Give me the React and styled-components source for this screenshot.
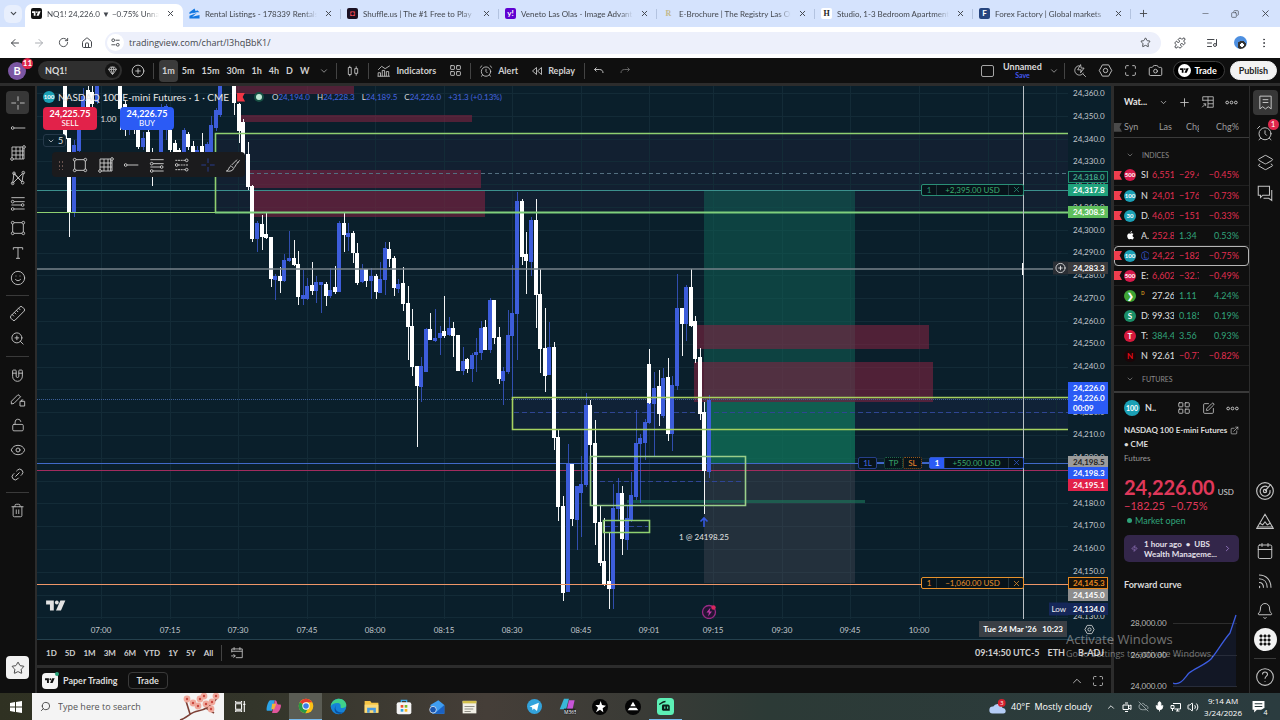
import React from 'react';
import styled, { createGlobalStyle, css } from 'styled-components';
import {
    ArrowLeft, ArrowRight, RotateCw, House, Star, Minus, Copy, X, Plus, ChevronDown, ChevronUp, ChevronRight,
    CirclePlus, Gem, LayoutGrid, AlarmClock, Camera, Maximize, SquarePen, Smile, Ruler, ZoomIn, Magnet,
    LockOpen, Trash2, Calendar, Bell, Search, Puzzle, ListMusic, Mic, Volume2, EllipsisVertical, CloudOff,
    ExternalLink, Eye, Link2, Zap, Layers2
} from 'lucide-react';

const GlobalStyle = createGlobalStyle`
    * { box-sizing: border-box; }
    body {
        margin: 0;
        background: #0f0f0f;
        overflow: hidden;
    }
    button, input {
        font: inherit;
        color: inherit;
        border: 0;
        padding: 0;
        margin: 0;
        background: none;
    }
    button { cursor: pointer; }
    a { color: inherit; text-decoration: none; }
`

const Page = styled.div`
    position: relative;
    display: flex;
    flex-direction: column;
    height: 100vh;
    color: #dbdbdb;
    font-family: Lato, 'Open Sans', sans-serif;
    font-size: 9px;
    line-height: 12px;
    svg { display: block; flex: none; }
`

/* ---------- icons ---------- */

const glyphs = {
    cross: <path d="M12 2v7M12 15v7M2 12h7M15 12h7" />,
    trend: <><circle cx="4" cy="12" r="2" /><path d="M6 12h17" /></>,
    grid: <><path d="M3 3h16v18H3zM3 9h18M3 15h18M9 3v18M15 3v18M21 5v16h-2" /><circle cx="21" cy="3" r="2" fill="#111" /><circle cx="3" cy="21" r="2" fill="#111" /></>,
    pattern: <><path d="M4 20 6 5l12 13 2-14M6 5 18 18M4 20l14-14" /><circle cx="4" cy="20" r="2" /><circle cx="6" cy="5" r="2" /><circle cx="20" cy="4" r="2" /><circle cx="19" cy="19" r="2" /></>,
    fib: <><path d="M2 4h20M6 10h16M2 15h15M6 21h16" /><circle cx="4" cy="10" r="2" /><circle cx="19" cy="15" r="2" /><circle cx="4" cy="21" r="2" /></>,
    position: <><path d="M2 5h15M6 12h16M2 19h15" strokeDasharray="3 1" /><circle cx="19" cy="5" r="2" /><circle cx="4" cy="12" r="2" /><circle cx="19" cy="19" r="2" /></>,
    rect: <><path d="M6 4h12M6 20h12M4 6v12M20 6v12" /><circle cx="4" cy="4" r="2" /><circle cx="20" cy="4" r="2" /><circle cx="4" cy="20" r="2" /><circle cx="20" cy="20" r="2" /></>,
    text: <path d="M5 7V4h14v3M12 4v16M9 20h6" />,
    brush: <path d="M2 21c4 0 3-6 7-8l4 4c-1 4-6 5-11 4zM10 12l8-8M14 16l3-5 5-6M18 7l2 2" />,
    pencilLock: <><path d="M2 14 12 4l4 3L6 17l-4 1zM15 14h7v7h-7zM17 14v-2h3" /></>,
    candles: <><path d="M4 6h5v12H4zM6.5 3v3M6.5 18v3M15 8h5v8h-5zM17.5 4v4M17.5 16v4" /></>,
    indicators: <><path d="M2 21v-6h4v6M9 21V11h4v10M16 21v-8h4v8M1 21h21M2 10l6-6 6 4 8-5" /></>,
    rewind: <path d="M11 5 3 12l8 7zM21 5l-8 7 8 7z" />,
    undo: <path d="M7 5 3 9l4 4M3 9h10c5 0 7 3 7 7" />,
    redo: <path d="m17 5 4 4-4 4M21 9H11c-5 0-7 3-7 7" />,
    gear: <><path d="M7 3h10l5 9-5 9H7l-5-9z" /><circle cx="12" cy="12" r="3.5" /></>,
    quickSearch: <><path d="M11 3a8 8 0 1 0 7 12M17 17l5 5M13 1l-5 9h6l-1 5 6-8h-5z" /></>,
    list: <path d="M4 3h16v18l-4-3-4 3-4-3-4 3zM8 8h8M8 12h8" />,
    chat: <path d="M3 3h15v12H9l-3 3v-3H3zM21 8v14l-4-3h-7" />,
    target: <><circle cx="12" cy="12" r="10" /><path d="M15 7a6 6 0 1 0 3 4M12 12l7-8" /><circle cx="12" cy="12" r="2" /></>,
    ideas: <path d="M2 20h20L12 3zM5 15l4 2 3-4 3 4 4-2M2 20l-1 2h22l-1-2" />,
    stream: <path d="M4 21a1 1 0 1 0 0-2M4 14c4 0 6 3 6 7M4 9c7 0 11 5 11 12M4 4c10 0 16 7 16 17" />,
    help: <><circle cx="12" cy="12" r="10" /><path d="M9 9c0-4 6-4 6 0 0 2-3 2-3 5M12 17v1" /></>,
    table: <path d="M3 10V3h18v18H10M3 9h18M12 3v18M12 15h9M2 21l6-6M4 15h4v4" />,
    goto: <path d="M3 11V5h18v15H10M3 9h18M7 2v5M17 2v5M2 17h7M6 14l3 3-3 3" />,
    tune: <><circle cx="7" cy="7" r="3" /><circle cx="17" cy="17" r="3" /><path d="M12 7h9M3 17h9" /></>,
    taskView: <path d="M3 7h11v10H3zM3 2v2h11V2M3 22v-2h11v2M19 2v20M17 8h4" />,
    dots: <><circle cx="4" cy="12" r="2.5" /><circle cx="12" cy="12" r="2.5" /><circle cx="20" cy="12" r="2.5" /></>,
    meet: <path d="M4 8h11v9H4zM15 11l5-3v9l-5-3M8 4h6M8 21h6" />,
    network: <path d="M6 5h15v11H9M12 20h7M15 16v4M2 9h6v6H2zM5 15v5" />
}

const Glyph = ({ name, size = 16, stroke = 1.4 }) => (
    <svg width={size} height={size} viewBox="0 0 24 24" fill="none" stroke="currentColor" strokeWidth={stroke} aria-hidden="true">
        {glyphs[name]}
    </svg>
)

const TvMark = ({ width = 20 }) => (
    <svg width={width} height={width * 0.55} viewBox="0 0 36 20" fill="currentColor" aria-hidden="true">
        <path d="M0 1h14v18H7V8H0zM26 1h9l-8 18h-9z" />
        <circle cx="19.5" cy="4.5" r="3.5" />
    </svg>
)

/* ---------- browser ---------- */

const TabStrip = styled.div`
    display: flex;
    align-items: center;
    height: 27px;
    padding-left: 4px;
    background: #d5e3fd;
    color: #43474e;
    font-size: 8px;
`

const TabMenu = styled.button`
    display: grid;
    place-items: center;
    width: 18px;
    height: 18px;
    margin-right: 3px;
    border-radius: 6px;
    background: #e8effd;
`

const Tab = styled.div`
    position: relative;
    display: flex;
    align-items: center;
    flex: 0 1 158px;
    min-width: 0;
    align-self: stretch;
    gap: 5px;
    padding: 0 7px 0 6px;
    ${p => p.$active && css`
        margin-top: 4px;
        padding-bottom: 4px;
        background: #fff;
        border-radius: 7px 7px 0 0;
    `}
    ${p => p.$line && css`
        &::after {
            content: '';
            position: absolute;
            right: 0;
            width: 1px;
            height: 10px;
            background: #b3c3e0;
        }
    `}
`

const TabTitle = styled.span`
    flex: 1;
    min-width: 0;
    overflow: hidden;
    white-space: nowrap;
    mask-image: linear-gradient(to right, #000 88%, transparent);
`

const Close = styled.button`
    display: grid;
    place-items: center;
    width: 12px;
    height: 12px;
`

const Favicon = styled.span`
    display: grid;
    place-items: center;
    flex: none;
    width: 11px;
    height: 11px;
    border-radius: 2px;
    background: ${p => p.$bg};
    color: ${p => p.$fg || '#fff'};
    font-size: 8px;
    font-weight: 700;
    line-height: 11px;
    font-family: ${p => p.$serif ? "'Liberation Serif', serif" : 'inherit'};
`

const WindowButtons = styled.div`
    display: flex;
    margin-left: auto;
    button { display: grid; place-items: center; width: 30px; height: 24px; }
`

const AddressRow = styled.div`
    display: flex;
    align-items: center;
    height: 31px;
    padding: 0 4px 0 3px;
    background: #fff;
    color: #44474c;
    font-family: 'Open Sans', sans-serif;
`

const NavButton = styled.button`
    display: grid;
    place-items: center;
    width: ${p => p.$wide ? 32 : 24}px;
    height: 24px;
    color: ${p => p.$off ? '#aaadb2' : '#44474c'};
`

const AddressBox = styled.label`
    display: flex;
    align-items: center;
    flex: 1;
    height: 22px;
    margin: 0 3px 0 6px;
    padding: 0 10px 0 2px;
    border-radius: 11px;
    background: #edf0fb;
    input { flex: 1; margin-left: 5px; outline: 0; font-size: 9px; }
`

const SiteInfo = styled.span`
    display: grid;
    place-items: center;
    width: 17px;
    height: 17px;
    border-radius: 50%;
    background: #fff;
`

const Profile = styled.span`
    width: 13px;
    height: 13px;
    border-radius: 50%;
    background: radial-gradient(circle at 60% 70%, #fff 0 15%, #333 16% 35%, #4d8fe0 36%);
`

const tabs = [
    { title: 'NQ1! 24,226.0 ▼ −0.75% Unnamed', bg: '#111', mark: <TvMark width={9} />, active: true },
    {
        title: 'Rental Listings - 178339 Rentals', bg: 'transparent',
        mark: <svg width="11" height="11" viewBox="0 0 24 24" fill="#1277e1"><path d="M12 1 1 9v4l14-5zM23 9l-5-4-11 7 10-3zM1 23v-6l16-6-10 8 16-4v8z" /></svg>
    },
    { title: 'Shuffle.us | The #1 Free to Play', bg: '#1b1022', fg: '#ff4d5a', mark: '◘' },
    { title: 'Veneto Las Olas - Image Advantage', bg: '#5f01d1', mark: 'y!' },
    { title: 'E-Brochure | The Registry Las Olas', bg: 'transparent', fg: '#c3b98a', mark: 'R', serif: true },
    { title: 'Studio, 1-3 Bedroom Apartments', bg: '#fff', fg: '#222', mark: 'H', serif: true },
    { title: 'Forex Factory | Global markets', bg: '#26457f', mark: 'F' }
]

const Browser = () => (
    <>
        <TabStrip>
            <TabMenu aria-label="Search tabs"><ChevronDown size={9} strokeWidth={3} /></TabMenu>
            {tabs.map((t, i) => (
                <Tab key={t.title} $active={t.active} $line={i > 0}>
                    <Favicon $bg={t.bg} $fg={t.fg} $serif={t.serif}>{t.mark}</Favicon>
                    <TabTitle>{t.title}</TabTitle>
                    <Close aria-label="Close tab"><X size={9} strokeWidth={2.6} /></Close>
                </Tab>
            ))}
            <NavButton aria-label="New tab"><Plus size={11} /></NavButton>
            <WindowButtons>
                <button aria-label="Minimize"><Minus size={9} strokeWidth={1.5} /></button>
                <button aria-label="Restore"><Copy size={8} style={{ transform: 'scaleX(-1)' }} /></button>
                <button aria-label="Close window"><X size={11} /></button>
            </WindowButtons>
        </TabStrip>
        <AddressRow>
            <NavButton aria-label="Back"><ArrowLeft size={12} /></NavButton>
            <NavButton aria-label="Forward" $off><ArrowRight size={12} /></NavButton>
            <NavButton aria-label="Reload"><RotateCw size={11} /></NavButton>
            <NavButton aria-label="Home"><House size={12} /></NavButton>
            <AddressBox>
                <SiteInfo><Glyph name="tune" size={11} stroke={2} /></SiteInfo>
                <input aria-label="Address" defaultValue="tradingview.com/chart/I3hqBbK1/" />
                <Star size={11} />
            </AddressBox>
            <NavButton aria-label="Extensions" $wide><Puzzle size={12} /></NavButton>
            <NavButton aria-label="Media" $wide><ListMusic size={12} /></NavButton>
            <NavButton aria-label="Profile"><Profile /></NavButton>
            <NavButton aria-label="Menu"><EllipsisVertical size={12} /></NavButton>
        </AddressRow>
    </>
)

/* ---------- top toolbar ---------- */

const TopBar = styled.header`
    display: flex;
    align-items: center;
    height: 28px;
    padding-right: 3px;
    border-bottom: 3px solid #2c2c2c;
    font-size: 9px;
    font-weight: 700;
    white-space: nowrap;
`

const Avatar = styled.button`
    position: relative;
    width: 18px;
    height: 18px;
    margin: 0 12px 0 8px;
    border-radius: 50%;
    background: #7b56a3;
    color: #fff;
    font-size: 11px;
`

const Badge = styled.span`
    position: absolute;
    top: -4px;
    right: -7px;
    min-width: 11px;
    height: 11px;
    border-radius: 6px;
    background: #e0284c;
    color: #fff;
    font-size: 8px;
    line-height: 11px;
    text-align: center;
`

const SymbolPill = styled.button`
    display: flex;
    align-items: center;
    justify-content: space-between;
    width: 84px;
    height: 19px;
    padding: 0 2px 0 7px;
    border-radius: 10px;
    background: #2f2f2f;
    span { display: grid; place-items: center; width: 15px; height: 15px; border-radius: 50%; background: #141414; }
`

const Tool = styled.button`
    display: flex;
    align-items: center;
    justify-content: center;
    gap: 5px;
    height: 22px;
    min-width: ${p => p.$min || 0}px;
    padding: 0 ${p => p.$pad || 0}px;
    border-radius: 4px;
    color: ${p => p.$dim ? '#6d6d6d' : '#d0d0d0'};
    background: ${p => p.$active ? '#3b3b3b' : 'none'};
`

const Intervals = styled.div`
    display: flex;
    gap: 1px;
    margin-left: 5px;
`

const Rule = styled.span`
    width: 1px;
    height: 16px;
    margin: 0 ${p => p.$gap || 0}px;
    background: #434343;
`

const Spacer = styled.span`
    flex: 1;
`

const LayoutName = styled.button`
    min-width: 40px;
    line-height: 10px;
    margin: 0 4px 0 8px;
    small { display: block; color: #4257f0; font-size: 7px; line-height: 7px; }
`

const LayoutBox = styled.button`
    width: 13px;
    height: 12px;
    border: 1px solid #a5a5a5;
    border-radius: 2px;
`

const Pill = styled.button`
    display: flex;
    align-items: center;
    gap: 3px;
    height: 19px;
    margin-left: 5px;
    padding: 0 7px 0 4px;
    border: 1px solid #3d3d3d;
    border-radius: 10px;
    background: #000;
    color: #fff;
    span { display: grid; place-items: center; width: 13px; height: 13px; border-radius: 50%; background: #fff; color: #000; }
    ${p => p.$solid && css`
        padding: 0 8px;
        border-color: #f2f2f2;
        background: #f2f2f2;
        color: #222;
    `}
`

const TopToolbar = () => (
    <TopBar>
        <Avatar>B<Badge>11</Badge></Avatar>
        <SymbolPill>NQ1!<span><Gem size={9} /></span></SymbolPill>
        <Tool $min={31} aria-label="Compare"><CirclePlus size={14} strokeWidth={1.5} /></Tool>
        <Rule />
        <Intervals>
            {['1m', '5m', '15m', '30m', '1h', '4h', 'D', 'W'].map((t, i) => (
                <Tool key={t} $pad={3} $active={i === 0}>{t}</Tool>
            ))}
        </Intervals>
        <Tool $min={24} aria-label="Intervals"><ChevronDown size={10} strokeWidth={1.5} /></Tool>
        <Rule />
        <Tool $min={31} aria-label="Candles"><Glyph name="candles" size={14} /></Tool>
        <Rule />
        <Tool $pad={8}><Glyph name="indicators" size={14} />Indicators</Tool>
        <Tool $min={22} aria-label="Templates"><LayoutGrid size={13} strokeWidth={1.6} /></Tool>
        <Rule $gap={4} />
        <Tool $pad={4}><AlarmClock size={14} strokeWidth={1.4} />Alert</Tool>
        <Tool $pad={9}><Glyph name="rewind" size={12} stroke={1.7} />Replay</Tool>
        <Rule />
        <Tool $min={28} aria-label="Undo"><Glyph name="undo" size={12} stroke={1.8} /></Tool>
        <Tool $min={24} $dim aria-label="Redo"><Glyph name="redo" size={12} stroke={1.8} /></Tool>
        <Spacer />
        <LayoutBox aria-label="Layout setup" />
        <LayoutName>Unnamed<small>Save</small></LayoutName>
        <Tool $min={16} aria-label="Manage layouts"><ChevronDown size={10} strokeWidth={1.5} /></Tool>
        <Rule $gap={2} />
        <Tool $min={25} aria-label="Quick search"><Glyph name="quickSearch" size={14} /></Tool>
        <Tool $min={26} aria-label="Settings"><Glyph name="gear" size={15} /></Tool>
        <Tool $min={25} aria-label="Fullscreen"><Maximize size={13} strokeWidth={1.6} /></Tool>
        <Tool $min={25} aria-label="Snapshot"><Camera size={15} strokeWidth={1.4} /></Tool>
        <Pill><span><TvMark width={9} /></span>Trade</Pill>
        <Pill $solid>Publish</Pill>
    </TopBar>
)

/* ---------- left tools ---------- */

const Workspace = styled.div`
    display: flex;
    flex: 1;
    min-height: 0;
`

const LeftRail = styled.nav`
    display: flex;
    flex-direction: column;
    align-items: center;
    width: 37px;
    padding: 5px 0 14px;
    border-right: 2px solid #2c2c2c;
`

const ToolGroup = styled.div`
    display: flex;
    flex-direction: column;
    gap: 2px;
    padding-bottom: 6px;
    & + & { padding-top: 6px; border-top: 1px solid #3a3a3a; }
    &:last-of-type { flex: 1; }
`

const RailButton = styled.button`
    position: relative;
    display: grid;
    place-items: center;
    width: 23px;
    height: 23px;
    border-radius: 4px;
    color: ${p => p.$light ? '#222' : '#c4c4c4'};
    background: ${p => p.$light ? '#f2f2f2' : p.$active ? '#373737' : 'none'};
`

const LeftTools = () => (
    <LeftRail>
        <ToolGroup>
            {['cross', 'trend', 'grid', 'pattern', 'fib', 'rect', 'text'].map((n, i) => (
                <RailButton key={n} $active={i === 0} aria-label={n}><Glyph name={n} /></RailButton>
            ))}
            <RailButton aria-label="Icons"><Smile size={16} strokeWidth={1.4} /></RailButton>
        </ToolGroup>
        <ToolGroup>
            <RailButton aria-label="Measure"><Ruler size={17} strokeWidth={1.4} style={{ transform: 'scaleX(-1)' }} /></RailButton>
            <RailButton aria-label="Zoom in"><ZoomIn size={15} strokeWidth={1.5} /></RailButton>
        </ToolGroup>
        <ToolGroup>
            <RailButton aria-label="Magnet"><Magnet size={15} strokeWidth={1.4} style={{ transform: 'rotate(135deg)' }} /></RailButton>
            <RailButton aria-label="Keep drawing"><Glyph name="pencilLock" /></RailButton>
            <RailButton aria-label="Lock drawings"><LockOpen size={14} strokeWidth={1.5} /></RailButton>
            <RailButton aria-label="Hide drawings"><Eye size={16} strokeWidth={1.4} /></RailButton>
            <RailButton aria-label="Link"><Link2 size={15} strokeWidth={1.5} style={{ transform: 'rotate(-45deg)' }} /></RailButton>
        </ToolGroup>
        <ToolGroup>
            <RailButton aria-label="Remove"><Trash2 size={15} strokeWidth={1.4} /></RailButton>
        </ToolGroup>
        <RailButton $light aria-label="Favorites"><Star size={14} strokeWidth={1.4} /></RailButton>
    </LeftRail>
)

/* ---------- chart ---------- */

const TOP_PRICE = 24363.07;
const PRICE_SPAN = 234.21;
const priceTop = p => `${((TOP_PRICE - p) / PRICE_SPAN) * 100}%`;

const BLUE = '#3d5ddb';
const WHITE = '#ffffff';

// x, high, low, body top, body bottom, rising
const candles = [
    [65, 86, 140, 86, 139, 0], [69, 138, 237, 138, 213, 0], [74, 140, 217, 145, 213, 1], [79, 122, 155, 125, 151, 1],
    [83, 88, 126, 96, 122, 1], [88, 86, 118, 90, 110, 0], [92, 86, 112, 92, 104, 0], [97, 86, 104, 86, 102, 1],
    [120, 86, 130, 86, 109, 0], [125, 100, 136, 104, 130, 0], [129, 110, 135, 112, 128, 1], [134, 112, 134, 118, 130, 0],
    [138, 122, 149, 130, 147, 0], [143, 132, 150, 138, 147, 1], [148, 129, 156, 132, 153, 0], [152, 148, 186, 152, 160, 0],
    [161, 104, 156, 108, 153, 1], [166, 104, 140, 106, 130, 1], [170, 128, 153, 130, 150, 0], [175, 140, 154, 143, 153, 0],
    [179, 148, 160, 150, 156, 0], [184, 128, 154, 130, 153, 1], [188, 132, 150, 134, 147, 0], [193, 141, 156, 146, 153, 0],
    [197, 146, 160, 150, 156, 1], [202, 133, 158, 146, 154, 0], [207, 142, 158, 144, 153, 1], [211, 116, 156, 125, 153, 1],
    [216, 108, 131, 110, 128, 1], [220, 86, 117, 86, 115, 1], [234, 86, 115, 86, 103, 0], [239, 103, 143, 104, 131, 0],
    [243, 119, 157, 122, 155, 0], [248, 142, 190, 154, 187, 0], [252, 185, 242, 186, 239, 0], [257, 221, 252, 223, 239, 1],
    [262, 215, 250, 224, 237, 0], [266, 213, 239, 234, 238, 0], [271, 237, 287, 237, 279, 0], [275, 274, 300, 276, 280, 1],
    [280, 267, 293, 276, 281, 0], [284, 254, 282, 260, 281, 1], [289, 231, 262, 258, 261, 1], [294, 240, 266, 258, 265, 0],
    [298, 251, 305, 264, 297, 0], [303, 270, 305, 295, 299, 1], [307, 278, 300, 286, 299, 1], [312, 262, 295, 285, 291, 0],
    [316, 276, 303, 282, 291, 1], [321, 282, 313, 282, 285, 1], [326, 282, 306, 284, 296, 0], [330, 268, 298, 290, 296, 1],
    [335, 266, 294, 287, 292, 0], [339, 221, 292, 223, 292, 1], [344, 213, 252, 223, 235, 0], [348, 223, 251, 233, 237, 1],
    [353, 231, 263, 233, 253, 0], [357, 243, 285, 253, 283, 0], [362, 264, 283, 269, 282, 1], [366, 269, 287, 269, 281, 0],
    [371, 268, 299, 276, 281, 1], [376, 274, 299, 276, 292, 0], [380, 262, 293, 279, 293, 1], [385, 242, 295, 248, 280, 1],
    [389, 242, 267, 249, 259, 0], [394, 256, 296, 258, 288, 0], [398, 279, 293, 284, 289, 1], [403, 267, 311, 283, 304, 0],
    [408, 286, 360, 303, 327, 0], [412, 309, 376, 326, 367, 0], [417, 366, 447, 366, 386, 0], [421, 357, 402, 366, 387, 1],
    [426, 328, 372, 329, 372, 1], [430, 313, 340, 329, 340, 0], [435, 309, 342, 338, 341, 1], [440, 326, 355, 333, 338, 1],
    [444, 296, 338, 331, 336, 0], [449, 317, 336, 328, 335, 1], [453, 322, 357, 328, 336, 0], [458, 335, 371, 335, 371, 0],
    [463, 347, 375, 361, 371, 1], [467, 358, 373, 359, 369, 0], [472, 353, 382, 355, 369, 1], [476, 338, 372, 352, 355, 1],
    [481, 321, 360, 328, 353, 1], [485, 320, 350, 327, 350, 0], [490, 298, 353, 300, 350, 1], [494, 300, 344, 300, 338, 0],
    [499, 327, 384, 337, 379, 0], [503, 367, 405, 371, 381, 1], [508, 310, 374, 335, 372, 1], [512, 265, 397, 313, 336, 1],
    [517, 192, 360, 201, 314, 1], [522, 199, 265, 201, 257, 0], [526, 232, 294, 254, 261, 0], [531, 217, 276, 220, 262, 1],
    [536, 199, 328, 220, 295, 0], [540, 269, 373, 294, 349, 0], [545, 308, 392, 348, 376, 0], [549, 322, 375, 347, 375, 1],
    [554, 342, 450, 347, 438, 0], [558, 430, 521, 437, 507, 0], [563, 496, 601, 506, 593, 0], [568, 444, 592, 464, 592, 1],
    [572, 464, 526, 464, 519, 0], [577, 486, 550, 486, 520, 1], [581, 456, 537, 484, 493, 1], [586, 393, 487, 405, 485, 1],
    [590, 400, 464, 405, 445, 0], [595, 420, 545, 443, 523, 0], [600, 505, 566, 522, 563, 0], [604, 518, 586, 561, 584, 0],
    [609, 533, 609, 581, 589, 0], [613, 484, 609, 508, 589, 1], [618, 478, 520, 493, 509, 1], [622, 486, 555, 493, 539, 0],
    [627, 506, 550, 518, 540, 1], [631, 472, 522, 495, 520, 1], [636, 410, 500, 443, 497, 1], [640, 434, 503, 438, 444, 1],
    [645, 419, 460, 422, 443, 1], [649, 400, 424, 403, 423, 1], [649, 349, 404, 364, 403, 0], [654, 372, 457, 388, 404, 1],
    [659, 370, 426, 386, 414, 0], [663, 368, 418, 378, 416, 1], [668, 358, 441, 377, 434, 0], [672, 376, 451, 385, 434, 1],
    [677, 274, 390, 308, 386, 1], [682, 308, 356, 308, 324, 0], [686, 285, 341, 287, 324, 1], [691, 269, 327, 287, 326, 0],
    [695, 316, 363, 321, 359, 0], [700, 348, 420, 357, 414, 0], [704, 402, 514, 412, 471, 0], [709, 395, 478, 400, 472, 1]
]

const gridX = [101, 170, 238, 307, 375, 444, 512, 581, 649, 713, 782, 850, 919, 988, 1056];
const gridY = Array.from({ length: 24 }, (_, i) => Math.round(93 + i * 22.8));

const zones = [
    [234, 86, 120, 8], [240, 115, 232, 7], [250, 170, 231, 18], [252, 191, 233, 26], [697, 325, 232, 24], [694, 362, 239, 40]
]

const ChartGrid = styled.section`
    display: grid;
    grid-template: 1fr 20px / 1fr 43px;
    flex: 1;
    min-height: 0;
    background: #0a1f2b;
    border-bottom: 1px solid #24404d;
`

const Plot = styled.div`
    position: relative;
    min-width: 0;
    min-height: 0;
    & > svg { width: 100%; height: 100%; }
`

const PlotDrawing = () => (
    <svg viewBox="37 86 1031 533" preserveAspectRatio="none" shapeRendering="crispEdges" role="img" aria-label="NASDAQ 100 price chart">
        <rect x="215" y="133" width="853" height="80" fill="#2b2444" opacity=".25" />
        <rect x="512" y="397" width="556" height="32" fill="#26306a" opacity=".2" />
        <g stroke="#132b37">
            {gridX.map(x => <path key={x} d={`M${x + 0.5} 86V619`} />)}
            {gridY.map(y => <path key={y} d={`M37 ${y + 0.5}H1068`} />)}
        </g>
        <rect x="704" y="191" width="151" height="272" fill="#0f6658" opacity=".5" />
        <rect x="710" y="402" width="145" height="61" fill="#0f7a5c" opacity=".5" />
        <rect x="704" y="463" width="151" height="120" fill="#5a5560" opacity=".32" />
        {zones.map(([x, y, w, h]) => <rect key={y} x={x} y={y} width={w} height={h} fill="#8a2342" opacity=".55" />)}
        <rect x="627" y="500" width="238" height="3" fill="#1b7a5c" opacity=".6" />
        <path d="M37 399.5H1068" stroke="#3c5f9a" strokeDasharray="1 1" />
        <path d="M250 173.5H1068" stroke="#536f80" strokeDasharray="4 3" />
        <g stroke="#2f4594" strokeDasharray="5 3">
            <path d="M514 412.5H1068M592 481.5H744M605 526.5H648" />
        </g>
        <path d="M37 190.5H1068" stroke="#3c908d" />
        <path d="M37 463.5H1068" stroke="#4069c8" />
        <path d="M37 470.5H1068" stroke="#a12c5e" />
        {candles.map(([x, high, low, top, bottom, up], i) => (
            <g key={i} fill={up ? BLUE : WHITE}>
                <rect x={x} y={high} width="1" height={low - high} opacity={up ? 0.75 : 0.95} />
                <rect x={x - 2} y={top} width="4" height={Math.max(bottom - top, 2)} />
            </g>
        ))}
        <g fill="none" stroke="#8fd070" strokeWidth="1.6" shapeRendering="auto">
            <path d="M215.5 212V133.5H1068" />
            <path d="M37 212.5H215" strokeWidth="1" />
            <path d="M215 212.5H1068" stroke="#7fcf7c" strokeWidth="2" />
            <path d="M1068 397.5H512.5V429.5H1068" stroke="#a6d160" />
            <path d="M590.5 456.5H745.5V505.5H590.5Z" stroke="#9ace8a" />
            <path d="M603.5 520.5H649.5V532.5H603.5Z" />
        </g>
        <path d="M37 584.5H1068" stroke="#ee9668" />
        <path d="M37 269H1068" stroke="#76828a" strokeWidth="2" opacity=".75" />
        <path d="M1023.5 86V619" stroke="#b9c0c5" />
        <path d="M1022.5 263V275" stroke="#fff" />
        <g shapeRendering="auto" fill="none">
            <path d="M704 527v-9M700.5 521.5l3.500-3.500 3.500 3.500" stroke="#3558e0" strokeWidth="1.6" />
            <circle cx="709" cy="612" r="6.500" stroke="#9a2c86" strokeWidth="1.3" fill="#241433" />
            <path d="m710.500 607.500-4 5h2.500l-1 4 4-5h-2.500z" fill="#c03aa8" />
            <circle cx="713.500" cy="607.500" r="2.200" fill="#d8275f" />
        </g>
        <text x="704" y="540" textAnchor="middle" fontSize="8" fill="#e4e4e4">1 @ 24198.25</text>
    </svg>
)

const ChartMark = styled.span`
    position: absolute;
    left: 9px;
    bottom: 8px;
    color: #e2e2e2;
`

const ChartHead = styled.div`
    position: absolute;
    top: 5px;
    left: 6px;
    display: flex;
    flex-direction: column;
    align-items: flex-start;
    gap: 4px;
`

const Legend = styled.div`
    display: flex;
    align-items: center;
    gap: 3px;
    color: #e6e6e6;
    white-space: nowrap;
    h1 { margin: 0; padding-right: 5px; font-size: 10px; font-weight: 400; }
`

const Flag = styled.span`
    display: block;
    width: 8px;
    height: 9px;
    background: ${p => p.$color || '#f23645'};
    clip-path: polygon(0 0, 100% 0, 70% 50%, 100% 100%, 0 100%);
`

const Live = styled.span`
    width: 6px;
    height: 6px;
    margin: 0 7px 0 8px;
    border-radius: 50%;
    background: #bfe8d5;
    box-shadow: 0 0 0 2px #175044;
`

const Ohlc = styled.span`
    margin-right: 4px;
    font-size: 8px;
    color: #d8d8d8;
    b { font-weight: 400; color: #4766e0; }
`

const Quotes = styled.div`
    display: flex;
    align-items: center;
    font-size: 8px;
`

const Quote = styled.button`
    width: 54px;
    height: 23px;
    border-radius: 4px;
    background: ${p => p.$buy ? '#2b5bf5' : '#e2224a'};
    color: #fff;
    font-size: 9px;
    font-weight: 700;
    line-height: 10px;
    small { display: block; font-size: 8px; font-weight: 400; line-height: 9px; }
`

const Lots = styled.span`
    width: 23px;
    text-align: center;
    color: #e0e0e0;
`

const Collapse = styled.button`
    display: flex;
    align-items: center;
    gap: 3px;
    height: 13px;
    padding: 0 2px 0 3px;
    border: 1px solid #26394a;
    border-radius: 3px;
    background: #0a1f2b;
    color: #e0e0e0;
`

const Favorites = styled.div`
    display: flex;
    align-items: center;
    justify-content: space-between;
    width: 193px;
    height: 25px;
    margin: 1px 0 0 9px;
    padding: 0 4px 0 6px;
    border-radius: 4px;
    background: #1b1b1d;
    color: #cfcfcf;
`

const Grip = styled.span`
    width: 5px;
    height: 10px;
    background: radial-gradient(circle, #6a5550 0 1px, transparent 1px) 0 0 / 3px 4px;
`

const CrossTool = styled.span`
    color: #2a3f96;
`

const Coin = styled.span`
    display: grid;
    place-items: center;
    flex: none;
    width: ${p => p.$size || 12}px;
    height: ${p => p.$size || 12}px;
    border-radius: 50%;
    background: ${p => p.$bg || '#1ba0b5'};
    color: ${p => p.$fg || '#fff'};
    font-size: ${p => p.$text || 6}px;
    font-weight: 700;
    line-height: 1;
`

const OrderRow = styled.div`
    position: absolute;
    right: 44px;
    display: flex;
    align-items: center;
    transform: translateY(-50%);
    font-size: 8px;
    color: ${p => p.$color};
`

const Link = styled.span`
    width: 7px;
    height: 1px;
    background: #3c62c4;
`

const Order = styled.div`
    display: flex;
    width: ${p => p.$narrow ? 95 : 103}px;
    height: 12px;
    border: 1px solid currentColor;
    border-radius: 2px;
    background: #07131a;
    line-height: 10px;
    text-align: center;
    & > b { width: 14px; font-weight: 400; }
    & > span { flex: 1; border: solid #23343c; border-width: 0 1px; color: ${p => p.$text || 'inherit'}; white-space: nowrap; }
    & > button { display: grid; place-items: center; width: 14px; }
    ${p => p.$narrow && css`
        & > b { background: #2b5bf5; color: #fff; font-weight: 700; }
    `}
`

const MiniTag = styled.button`
    width: 19px;
    height: 12px;
    border: 1px ${p => p.$dotted ? 'dotted' : 'solid'} ${p => p.$line};
    border-radius: 2px;
    background: #07131a;
    color: ${p => p.$fg};
    line-height: 10px;
`

const PriceAxis = styled.div`
    position: relative;
    overflow: hidden;
    font-size: 8px;
    color: #c2c7cb;
`

const AxisLabel = styled.span`
    position: absolute;
    left: 5px;
    transform: translateY(-50%);
    line-height: 10px;
`

const AxisTag = styled.span`
    position: absolute;
    left: 0;
    width: 40px;
    transform: translateY(-50%);
    border: 1px solid ${p => p.$line || p.$bg};
    background: ${p => p.$bg};
    color: ${p => p.$fg || '#fff'};
    line-height: 10px;
    font-weight: 700;
    padding: 0 0 0 4px;
`

const SideTag = styled.span`
    position: absolute;
    right: 0;
    display: grid;
    place-items: center;
    min-width: 15px;
    height: 13px;
    padding: 0 2px;
    transform: translateY(-50%);
    background: ${p => p.$bg};
    color: #eee;
    font-size: 8px;
`

const TimeAxis = styled.div`
    position: relative;
    overflow: hidden;
    color: #c2c7cb;
    font-size: 8px;
`

const TimeLabel = styled.span`
    position: absolute;
    top: 5px;
    transform: translateX(-50%);
`

const DateTag = styled.span`
    position: absolute;
    top: 2px;
    right: 1px;
    padding: 0 4px;
    background: #3a3f45;
    color: #fff;
    font-weight: 700;
    line-height: 16px;
    white-space: pre;
`

const AxisCorner = styled.button`
    display: grid;
    place-items: center;
`

const axisTags = [
    { at: 24323.2, text: '24,318.0', bg: '#0a1f2b', line: '#1f8f70', fg: '#43a889' },
    { at: 24317.5, text: '24,317.8', bg: '#20a27d' },
    { at: 24307.8, text: '24,308.3', bg: '#5fbf5d' },
    { at: 24283, text: '24,283.3', bg: '#3b3b3d' },
    { at: 24226, text: ['24,226.0', '24,226.0', '00:09'], bg: '#2b5bf5' },
    { at: 24198, text: '24,198.5', bg: '#9b9b9b', fg: '#222' },
    { at: 24193, text: '24,198.3', bg: '#2b5bf5' },
    { at: 24187.6, text: '24,195.1', bg: '#e2224a' },
    { at: 24144.7, text: '24,145.3', bg: '#17130c', line: '#e8891f', fg: '#e8891f' },
    { at: 24139.2, text: '24,145.0', bg: '#8d8d8d' },
    { at: 24133.4, text: '24,134.0', bg: '#152759' }
]

const times = ['07:00', '07:15', '07:30', '07:45', '08:00', '08:15', '08:30', '08:45', '09:01', '09:15', '09:30', '09:45', '10:00'];

const Chart = () => (
    <ChartGrid>
        <Plot>
            <PlotDrawing />
            <ChartHead>
                <Legend>
                    <Coin>100</Coin>
                    <h1>NASDAQ 100 E-mini Futures · 1 · CME</h1>
                    <Flag />
                    <Live />
                    {[['O', '24,194.0'], ['H', '24,228.3'], ['L', '24,189.5'], ['C', '24,226.0'], ['', '+31.3 (+0.13%)']].map(([k, v]) => (
                        <Ohlc key={v}>{k}<b>{v}</b></Ohlc>
                    ))}
                </Legend>
                <Quotes>
                    <Quote>24,225.75<small>SELL</small></Quote>
                    <Lots>1.00</Lots>
                    <Quote $buy>24,226.75<small>BUY</small></Quote>
                </Quotes>
                <Collapse><ChevronDown size={8} />5</Collapse>
                <Favorites>
                    <Grip />
                    {['rect', 'grid', 'trend', 'fib', 'position'].map(n => <Glyph key={n} name={n} />)}
                    <CrossTool><Glyph name="cross" /></CrossTool>
                    <Glyph name="brush" />
                </Favorites>
            </ChartHead>
            <OrderRow $color="#2a8f76" style={{ top: priceTop(24317.4) }}>
                <Order $text="#3cab6e"><b>1</b><span>+2,395.00 USD</span><button aria-label="Cancel"><X size={9} /></button></Order>
            </OrderRow>
            <OrderRow $color="#3157c9" style={{ top: priceTop(24197.5) }}>
                <MiniTag $line="#263f8a" $fg="#4468e0">1L</MiniTag>
                <Link />
                <MiniTag $dotted $line="#1f6b4c" $fg="#37a568">TP</MiniTag>
                <MiniTag $dotted $line="#9a5a1c" $fg="#f0882a">SL</MiniTag>
                <Link />
                <Order $narrow $text="#3cab6e"><b>1</b><span>+550.00 USD</span><button aria-label="Close position"><X size={9} /></button></Order>
            </OrderRow>
            <OrderRow $color="#e8922c" style={{ top: priceTop(24144.6) }}>
                <Order><b>1</b><span>−1,060.00 USD</span><button aria-label="Cancel"><X size={9} /></button></Order>
            </OrderRow>
            <SideTag $bg="#2b2f35" style={{ top: priceTop(24283) }}><CirclePlus size={11} strokeWidth={1.8} /></SideTag>
            <SideTag $bg="#152759" style={{ top: priceTop(24133.4) }}>Low</SideTag>
            <ChartMark><TvMark width={20} /></ChartMark>
        </Plot>
        <PriceAxis>
            {Array.from({ length: 24 }, (_, i) => 24360 - i * 10).map(p => (
                <AxisLabel key={p} style={{ top: priceTop(p) }}>{`${p.toLocaleString('en-US')}.0`}</AxisLabel>
            ))}
            {axisTags.map(t => (
                <AxisTag key={t.at} $bg={t.bg} $line={t.line} $fg={t.fg} style={{ top: priceTop(t.at) }}>
                    {[].concat(t.text).map((line, i) => <div key={i}>{line}</div>)}
                </AxisTag>
            ))}
        </PriceAxis>
        <TimeAxis>
            {times.map((t, i) => (
                <TimeLabel key={t} style={{ left: `${((gridX[i] - 37) / 1031) * 100}%` }}>{t}</TimeLabel>
            ))}
            <DateTag>Tue 24 Mar '26   10:23</DateTag>
        </TimeAxis>
        <AxisCorner aria-label="Scale settings"><Glyph name="gear" size={11} stroke={1.8} /></AxisCorner>
    </ChartGrid>
)

/* ---------- below the chart ---------- */

const ChartColumn = styled.main`
    display: flex;
    flex-direction: column;
    flex: 1;
    min-width: 0;
    border-right: 3px solid #2c2c2c;
`

const RangeBar = styled.div`
    display: flex;
    align-items: center;
    gap: 8px;
    height: 28px;
    padding: 0 7px 0 9px;
    border-bottom: 3px solid #2c2c2c;
    color: #d0d0d0;
    font-size: 8px;
    font-weight: 700;
`

const Session = styled.div`
    display: flex;
    gap: ${p => p.$wide ? 13 : 8}px;
    font-size: 9px;
`

const AccountBar = styled.div`
    display: flex;
    align-items: center;
    gap: 5px;
    height: 25px;
    padding: 0 7px 0 5px;
    font-weight: 700;
`

const Broker = styled.span`
    position: relative;
    display: grid;
    place-items: center;
    width: 16px;
    height: 16px;
    border-radius: 4px;
    background: #f4f4f4;
    color: #111;
    &::after {
        content: '';
        position: absolute;
        top: -1px;
        right: -1px;
        width: 4px;
        height: 4px;
        border-radius: 50%;
        background: #2aa37a;
    }
`

const TradeButton = styled.button`
    height: 17px;
    margin-left: 5px;
    padding: 0 8px;
    border: 1px solid #3a3a3a;
    border-radius: 4px;
`

const ChartFooter = () => (
    <>
        <RangeBar>
            {['1D', '5D', '1M', '3M', '6M', 'YTD', '1Y', '5Y', 'All'].map(r => <button key={r}>{r}</button>)}
            <Rule />
            <button aria-label="Go to date"><Glyph name="goto" size={14} /></button>
            <Spacer />
            <Session $wide>
                <Session>
                    <button>09:14:50 UTC-5</button>
                    <button>ETH</button>
                </Session>
                <button>B-ADJ</button>
            </Session>
        </RangeBar>
        <AccountBar>
            <Broker><TvMark width={10} /></Broker>
            Paper Trading
            <TradeButton>Trade</TradeButton>
            <Spacer />
            <Tool $min={20} aria-label="Open panel"><ChevronUp size={14} strokeWidth={1.4} /></Tool>
            <Tool aria-label="Maximize panel"><Maximize size={12} strokeWidth={1.6} /></Tool>
        </AccountBar>
    </>
)

/* ---------- watchlist ---------- */

const SidePanel = styled.aside`
    width: 136px;
    overflow: hidden;
    border-right: 1px solid #2c2c2c;
`

const PanelHead = styled.div`
    display: flex;
    align-items: center;
    height: 32px;
    padding: 0 11px 0 10px;
    font-size: 9px;
    font-weight: 700;
    color: #e6e6e6;
    gap: 10px;
    button { color: #c8c8c8; }
    span { flex: 1; }
`

const List = styled.table`
    width: 100%;
    table-layout: fixed;
    border-collapse: collapse;
    font-size: 9px;
    th, td {
        height: 20px;
        padding: 0;
        overflow: hidden;
        white-space: nowrap;
        text-align: left;
        font-weight: 400;
        border-bottom: 1px solid #202020;
    }
    th { height: 19px; color: #9c9c9c; border-bottom-color: #3a3a3a; }
    th:last-child, td:last-child { padding-right: 10px; text-align: right; }
`

const Col = styled.col`
    width: ${p => p.$w};
`

const Clip = styled.div`
    width: ${p => p.$w}px;
    overflow: hidden;
    color: ${p => p.$color || 'inherit'};
`

const Row = styled.tr`
    color: ${p => p.$up ? '#31a37a' : '#e02e50'};
    ${p => p.$selected && css`
        outline: 1px solid #b5b5b5;
        outline-offset: -1px;
        border-radius: 4px;
    `}
`

const GroupTitle = styled.button`
    display: flex;
    align-items: center;
    gap: 8px;
    height: ${p => p.$last ? 25 : 28}px;
    padding: ${p => p.$last ? 1 : 7}px 0 0 12px;
    color: #8c8c8c;
    font-size: 7px;
`

const PanelFlag = styled.div`
    display: flex;
    align-items: center;
    gap: 2px;
`

const PlainCell = styled.td`
    && { border: 0; height: 28px; }
`

const red = '#e02e50';
const green = '#31a37a';
const plain = '#e0e0e0';

const Apple = () => (
    <svg width="9" height="9" viewBox="0 0 24 24" fill="#fff" aria-hidden="true">
        <path d="M12 7c3-2 6-1 8 1-4 3-3 8 1 9-2 5-4 6-6 5-2-1-3-1-5 0C5 23 0 11 6 7c2-1 4 0 6 0zM12 5c0-3 2-5 4-5 0 3-2 5-4 5z" />
    </svg>
)

const symbols = [
    { flag: 1, coin: '500', bg: '#d6194a', name: 'SI', last: '6,551', chg: '−29.4', pct: '−0.45%' },
    { flag: 1, coin: '100', name: 'N', last: '24,01', chg: '−176', pct: '−0.73%' },
    { flag: 1, coin: '30', name: 'D.', last: '46,05', chg: '−151', pct: '−0.33%' },
    { coin: <Apple />, bg: '#0f0f0f', name: 'A.', last: '252.8', chg: '1.34', pct: '0.53%', up: true },
    { flag: 1, coin: '100', name: 'Ⓛ', mark: '#3f63ea', last: '24,22', chg: '−182', pct: '−0.75%', selected: true },
    { flag: 1, coin: '500', bg: '#d6194a', name: 'E:', last: '6,602', chg: '−32.7', pct: '−0.49%' },
    { coin: '❯', bg: '#3fa535', name: 'ᴰ', mark: '#d8981f', last: '27.26', lastColor: plain, chg: '1.11', pct: '4.24%', up: true },
    { coin: 'S', bg: '#1b8f68', name: 'D:', last: '99.33', lastColor: plain, chg: '0.185', pct: '0.19%', up: true },
    { coin: 'T', bg: '#d6193c', name: 'T:', last: '384.4', lastColor: green, chg: '3.56', pct: '0.93%', up: true },
    { coin: 'N', bg: '#1c0508', fg: '#e50914', name: 'N', last: '92.61', lastColor: plain, chg: '−0.77', pct: '−0.82%' }
]

const Watchlist = () => (
    <>
        <PanelHead>
            <span>Wat...</span>
            <button aria-label="Watchlists"><ChevronDown size={9} /></button>
            <button aria-label="Add symbol"><Plus size={13} strokeWidth={1.6} /></button>
            <button aria-label="Table view"><Glyph name="table" size={14} /></button>
            <button aria-label="More"><Glyph name="dots" size={13} stroke={1.8} /></button>
        </PanelHead>
        <List>
            <colgroup><Col $w="27px" /><Col $w="11px" /><Col $w="27px" /><Col $w="24px" /><Col $w="auto" /></colgroup>
            <thead>
                <tr>
                    <th colSpan={2}><PanelFlag><Flag $color="#4a4a4a" />Syn</PanelFlag></th>
                    <th><Clip $w={22}>&nbsp;&nbsp;&nbsp;Las</Clip></th>
                    <th><Clip $w={20}>&nbsp;&nbsp;&nbsp;Chg</Clip></th>
                    <th>Chg%</th>
                </tr>
            </thead>
            <tbody>
                <tr><PlainCell colSpan={5}><GroupTitle><ChevronDown size={8} />INDICES</GroupTitle></PlainCell></tr>
                {symbols.map((s, i) => (
                    <Row key={i} $up={s.up} $selected={s.selected}>
                        <td>
                            <PanelFlag>
                                <Flag $color={s.flag ? '#ef3e4e' : 'transparent'} />
                                <Coin $bg={s.bg} $fg={s.fg} $text={s.coin.length > 1 ? 6 : 8}>{s.coin}</Coin>
                            </PanelFlag>
                        </td>
                        <td><Clip $w={8} $color={s.mark || plain}>{s.name}</Clip></td>
                        <td><Clip $w={22} $color={s.lastColor || red}>{s.last}</Clip></td>
                        <td><Clip $w={20}>{s.chg}</Clip></td>
                        <td>{s.pct}</td>
                    </Row>
                ))}
            </tbody>
        </List>
        <GroupTitle $last><ChevronDown size={8} />FUTURES</GroupTitle>
    </>
)

const Details = styled.section`
    border-top: 2px solid #3a3a3a;
    padding: 6px 10px 0 10px;
    h2 { margin: 17px 0 0; font-size: 9px; font-weight: 700; }
`

const DetailHead = styled.div`
    display: flex;
    align-items: center;
    gap: 5px;
    height: 18px;
    font-size: 9px;
    font-weight: 700;
    button { margin-left: 6px; color: #c8c8c8; }
`

const Description = styled.div`
    display: flex;
    align-items: center;
    gap: 3px;
    margin-top: ${p => p.$first ? 7 : 1}px;
    font-size: 8px;
    line-height: 13px;
    font-weight: ${p => p.$muted ? 400 : 700};
    color: ${p => p.$muted ? '#9a9a9a' : '#dcdcdc'};
    white-space: nowrap;
`

const LastPrice = styled.div`
    display: flex;
    align-items: baseline;
    gap: 3px;
    height: 24px;
    margin-top: 10px;
    color: #e0385a;
    font-size: 20px;
    font-weight: 700;
    line-height: 24px;
    small { color: #d0d0d0; font-size: 8px; font-weight: 400; line-height: 10px; }
`

const Change = styled.div`
    color: #e0385a;
    font-size: 11px;
    line-height: 14px;
`

const Market = styled.div`
    display: flex;
    align-items: center;
    gap: 3px;
    height: 15px;
    padding-left: 3px;
    color: #2fa37a;
    font-size: 9px;
    &::before { content: ''; width: 5px; height: 5px; border-radius: 50%; background: currentColor; }
`

const News = styled.a`
    display: flex;
    align-items: center;
    justify-content: space-between;
    height: 27px;
    margin-top: 7px;
    padding: 0 7px;
    border-radius: 5px;
    background: #33264a;
    color: #e4e0ea;
    font-size: 8px;
    font-weight: 700;
    line-height: 10px;
    white-space: nowrap;
    svg { color: #a887d8; }
`

const Curve = styled.div`
    display: grid;
    grid-template-columns: 49px 1fr;
    margin-top: 22px;
    font-size: 8px;
    color: #b8b8b8;
`

const CurveLabels = styled.div`
    display: flex;
    flex-direction: column;
    justify-content: space-between;
    align-items: center;
    height: 84px;
    margin-top: 4px;
    padding-bottom: 9px;
`

const SymbolDetails = () => (
    <Details>
        <DetailHead>
            <Coin $size={16} $text={7}>100</Coin>
            N..
            <Spacer />
            <button aria-label="Components"><LayoutGrid size={14} strokeWidth={1.5} /></button>
            <button aria-label="Note"><SquarePen size={13} strokeWidth={1.5} /></button>
            <button aria-label="More"><Glyph name="dots" size={13} stroke={1.8} /></button>
        </DetailHead>
        <Description $first>NASDAQ 100 E-mini Futures <ExternalLink size={9} strokeWidth={1.6} /></Description>
        <Description>• CME</Description>
        <Description $muted>Futures</Description>
        <LastPrice>24,226.00<small>USD</small></LastPrice>
        <Change>−182.25&nbsp; −0.75%</Change>
        <Market>Market open</Market>
        <News href="#news">
            <Zap size={7} />
            <span>1 hour ago&nbsp; • &nbsp;UBS<br />Wealth Manageme...</span>
            <ChevronRight size={9} />
        </News>
        <h2>Forward curve</h2>
        <Curve>
            <CurveLabels><span>28,000.00</span><span>26,000.00</span><span>24,000.00</span></CurveLabels>
            <svg width="66" height="78" viewBox="0 0 66 78" aria-hidden="true">
                <path d="M0 10.500H64M0 42.500H64M0 73.500H64" stroke="#2d2d2d" />
                <path d="M0 70c8 3 12-6 16-10 6-5 16-8 22-14 6-7 12-18 19-26l6-18V74H0z" fill="#1c2a5a" opacity=".3" />
                <path d="M0 70c8 3 12-6 16-10 6-5 16-8 22-14 6-7 12-18 19-26l6-18" fill="none" stroke="#3c5ce0" strokeWidth="1.300" />
            </svg>
        </Curve>
    </Details>
)

/* ---------- right rail ---------- */

const RightRail = styled.nav`
    display: flex;
    flex-direction: column;
    align-items: center;
    gap: 5px;
    width: 30px;
    padding: 4px 0 4px;
    & > hr { width: 22px; margin: 2px 0 0; border: 0; border-top: 1px solid #3a3a3a; }
`

const RightButton = styled(RailButton)`
    width: 25px;
    height: 25px;
    ${p => p.$round && css`
        width: 23px;
        height: 23px;
        border-radius: 50%;
    `}
`

const CornerBadge = styled(Badge)`
    top: -1px;
    right: -1px;
`

const NineDots = styled.span`
    width: 12px;
    height: 12px;
    background: radial-gradient(circle, #111 0 1px, transparent 2px) 0 0 / 4px 4px;
`

const RightTools = () => (
    <RightRail>
        <RightButton $active aria-label="Watchlist"><Glyph name="list" size={17} /></RightButton>
        <RightButton aria-label="Alerts"><AlarmClock size={18} strokeWidth={1.3} /><CornerBadge>1</CornerBadge></RightButton>
        <RightButton aria-label="Object tree"><Layers2 size={17} strokeWidth={1.4} /></RightButton>
        <RightButton aria-label="Chats"><Glyph name="chat" size={18} /></RightButton>
        <Spacer />
        <RightButton aria-label="Screener"><Glyph name="target" size={20} /></RightButton>
        <RightButton aria-label="Pine"><Glyph name="ideas" size={18} /></RightButton>
        <RightButton aria-label="Calendar"><Calendar size={18} strokeWidth={1.3} /></RightButton>
        <RightButton aria-label="Community"><Glyph name="stream" size={18} /></RightButton>
        <RightButton aria-label="Notifications"><Bell size={18} strokeWidth={1.3} /></RightButton>
        <RightButton $light $round aria-label="Products"><NineDots /></RightButton>
        <hr />
        <RightButton aria-label="Help"><Glyph name="help" size={20} stroke={1.3} /></RightButton>
    </RightRail>
)

/* ---------- taskbar ---------- */

const Taskbar = styled.footer`
    display: flex;
    align-items: stretch;
    height: 27px;
    background: linear-gradient(to right, #2f3122 0, #33352a 20%, #453e38 38%, #3a3b36 50%, #2c3a36 60%, #2b3c3f);
    color: #fff;
    font-family: 'Open Sans', sans-serif;
`

const StartButton = styled.button`
    display: grid;
    place-items: center;
    width: 32px;
`

const SearchBox = styled.label`
    display: flex;
    align-items: center;
    gap: 7px;
    width: 192px;
    padding-left: 8px;
    background: #f4f4f4;
    color: #444;
    input { flex: 1; min-width: 0; outline: 0; font-size: 9px; }
    input::placeholder { color: #555; opacity: 1; }
`

const Apps = styled.div`
    display: grid;
    grid-template-columns: repeat(14, 1fr);
    flex: 0 1 458px;
`

const TaskButton = styled.button`
    display: grid;
    place-items: center;
    ${p => p.$open && css`border-bottom: 1px solid #76b9ed;`}
    ${p => p.$focus && css`background: #5a5c54;`}
`

const Tray = styled.div`
    display: flex;
    align-items: center;
    gap: 5px;
    margin-left: auto;
    padding-right: 15px;
    font-size: 9px;
    white-space: nowrap;
`

const Weather = styled.button`
    display: flex;
    align-items: center;
    gap: 5px;
    margin-right: 9px;
`

const Clock = styled.div`
    font-size: 8px;
    line-height: 12px;
    text-align: center;
`

const Notice = styled.button`
    position: relative;
    margin-left: 5px;
    span {
        position: absolute;
        right: -5px;
        bottom: -4px;
        width: 9px;
        height: 9px;
        border-radius: 50%;
        background: #26383b;
        font-size: 7px;
        line-height: 9px;
    }
`

const Blossom = () => (
    <svg width="46" height="27" viewBox="0 0 46 27" aria-hidden="true">
        <path d="M2 27c8-2 10-8 18-9s14-6 20-14M12 21 8 8M28 15l8 5" fill="none" stroke="#7c3f35" strokeWidth="1.6" />
        {[[9, 6], [15, 10], [22, 6], [20, 13], [28, 11], [34, 9], [33, 16], [38, 3], [26, 3]].map(([x, y]) => (
            <g key={x}><circle cx={x} cy={y} r="3.400" fill="#f0a99c" /><circle cx={x} cy={y} r="1.200" fill="#c9473f" /></g>
        ))}
    </svg>
)

const appIcons = {
    tasks: <Glyph name="taskView" size={13} stroke={2} />,
    copilot: <svg width="17" height="17" viewBox="0 0 24 24"><path d="M7 3h7l-4 15H3c-2 0 0-12 4-15z" fill="#2ba4e8" /><path d="M14 3c4 0 2 6 5 6h3c2 2-2 12-6 12h-6z" fill="#e0569c" /><path d="m10 8 6 0-3 8H9z" fill="#f1b33c" /></svg>,
    chrome: <svg width="16" height="16" viewBox="0 0 24 24"><circle cx="12" cy="12" r="11" fill="#fbc116" /><path d="M12 12 2.500 6.500A11 11 0 0 1 21.500 6.500H12z" fill="#e33b2e" /><path d="M2.500 6.500A11 11 0 0 0 11 23l5-9-4-2z" fill="#279847" /><circle cx="12" cy="12" r="5.500" fill="#fff" /><circle cx="12" cy="12" r="4.200" fill="#3c7de6" /></svg>,
    edge: <svg width="17" height="17" viewBox="0 0 24 24"><circle cx="12" cy="12" r="11" fill="#1583d8" /><path d="M1 12C2 4 8 1 13 1c6 0 10 5 10 9 0 5-8 5-8 3s1-6-5-6c-4 0-8 2-9 5z" fill="#3fd08a" /><path d="M9 10c-4 5 1 12 10 10-8 6-17-2-10-10z" fill="#0b4f9e" /></svg>,
    files: <svg width="15" height="15" viewBox="0 0 24 24"><path d="M1 3h9l2 3h11v16H1z" fill="#f6c544" /><path d="M1 9h22v13H1z" fill="#fadb7b" /><path d="M5 14h14v8h-4v-4H9v4H5z" fill="#4a9be0" /></svg>,
    store: <svg width="16" height="16" viewBox="0 0 24 24"><path d="M8 6V2h8v4" fill="none" stroke="#3ba8e8" strokeWidth="2" /><rect x="1" y="5" width="22" height="18" rx="3" fill="#f4f4f4" /><path d="M7 9h4v4H7z" fill="#e8502e" /><path d="M13 9h4v4h-4z" fill="#7db928" /><path d="M7 15h4v4H7z" fill="#2ea3e0" /><path d="M13 15h4v4h-4z" fill="#f8b71c" /></svg>,
    mail: <svg width="16" height="16" viewBox="0 0 24 24"><path d="m2 9 12-7 9 7v13H5z" fill="#3f9df0" /><path d="M8 22 23 9v13z" fill="#1b62c4" /><circle cx="6" cy="16" r="5" fill="#1a56b0" stroke="#fff" /></svg>,
    notes: <svg width="15" height="15" viewBox="0 0 24 24"><path d="M1 3h22v20H1z" fill="#f2f0e6" /><path d="M1 3h22v4H1z" fill="#d3c04c" /><path d="M4 12h16M4 16h14M4 20h10" stroke="#8a8a80" strokeWidth="1.500" /></svg>,
    telegram: <svg width="15" height="15" viewBox="0 0 24 24"><circle cx="12" cy="12" r="12" fill="#33a3dc" /><path d="m4 12 15-6-3 13-5-4-2 3-1-5z" fill="#fff" /></svg>,
    m365: <svg width="17" height="17" viewBox="0 0 24 24"><path d="M7 1h7l-4 15H1z" fill="#39b7d8" /><path d="M14 3h8l-3 14h-8z" fill="#c855d8" /><path d="M7 15h16v8H7z" fill="#222" /><text x="7" y="22" fontSize="7" fill="#fff">M365</text></svg>,
    star: <svg width="16" height="16" viewBox="0 0 24 24"><circle cx="12" cy="12" r="12" fill="#050505" /><path d="m13 3 2 6 6 1-5 4 1 6-5-4-6 4 3-7-4-4h6z" fill="#fff" /></svg>,
    peak: <svg width="16" height="16" viewBox="0 0 24 24"><circle cx="12" cy="12" r="12" fill="#050505" /><path d="m12 4 4 7H8zM7 13h10l3 4H4z" fill="#fff" /></svg>,
    bot: <svg width="17" height="17" viewBox="0 0 24 24"><rect width="24" height="24" rx="5" fill="#5df0b6" /><path d="M8 9h8l2 2v7H8l-1-2v-5z" fill="#0c1f1a" /><path d="M3 9c3-1 4-4 9-4" fill="none" stroke="#0c1f1a" strokeWidth="2" /><path d="M11 12v3M15 12v3" stroke="#5df0b6" strokeWidth="1.500" /></svg>
}

const appOrder = ['tasks', 'copilot', 'chrome', 'edge', 'files', 'store', 'mail', 'notes', null, 'telegram', 'm365', 'star', 'peak', 'bot'];

const WindowsTaskbar = () => (
    <Taskbar>
        <StartButton aria-label="Start">
            <svg width="12" height="12" viewBox="0 0 24 24" fill="#fff"><path d="M0 4 10 2v9H0zM12 2l12-2v11H12zM0 13h10v9L0 20zM12 13h12v11l-12-2z" /></svg>
        </StartButton>
        <SearchBox>
            <Search size={11} style={{ transform: 'scaleX(-1)' }} />
            <input type="search" aria-label="Search" placeholder="Type here to search" />
            <Blossom />
        </SearchBox>
        <Apps>
            {appOrder.map((name, i) => name
                ? <TaskButton key={i} aria-label={name} $focus={name === 'chrome'} $open={name === 'chrome' || name === 'bot'}>{appIcons[name]}</TaskButton>
                : <span key={i} />
            )}
        </Apps>
        <Tray>
            <Weather>
                <svg width="17" height="17" viewBox="0 0 24 24"><path d="M5 22a5 5 0 0 1 1-10 7 7 0 0 1 13 2 4 4 0 0 1 1 8z" fill="#b5cdf6" /><circle cx="18" cy="7" r="5.500" fill="#d5202e" /><text x="16" y="10" fontSize="8" fill="#fff">3</text></svg>
                <span>40°F&nbsp; Mostly cloudy</span>
            </Weather>
            <ChevronUp size={10} />
            <Glyph name="meet" size={12} stroke={2} />
            <CloudOff size={11} color="#9aa5a7" />
            <Mic size={11} fill="#fff" />
            <Glyph name="network" size={12} stroke={2} />
            <Volume2 size={12} />
            <Clock>9:14 AM<br />3/24/2026</Clock>
            <Notice aria-label="Notifications">
                <svg width="13" height="13" viewBox="0 0 24 24"><path d="M1 2h22v16H9l-5 5v-5H1z" fill="#fff" /><path d="M5 7h14M5 12h14" stroke="#26383b" strokeWidth="2" /></svg>
                <span>4</span>
            </Notice>
        </Tray>
    </Taskbar>
)

const Activation = styled.div`
    position: absolute;
    right: 56px;
    bottom: 59px;
    width: 158px;
    color: rgba(255, 255, 255, 0.42);
    font-family: 'Open Sans', sans-serif;
    font-size: 9px;
    line-height: 14px;
    white-space: nowrap;
    pointer-events: none;
    strong { display: block; font-size: 13px; font-weight: 400; line-height: 16px; }
`

const App = () => (
    <>
        <GlobalStyle />
        <Page>
            <Browser />
            <TopToolbar />
            <Workspace>
                <LeftTools />
                <ChartColumn>
                    <Chart />
                    <ChartFooter />
                </ChartColumn>
                <SidePanel>
                    <Watchlist />
                    <SymbolDetails />
                </SidePanel>
                <RightTools />
            </Workspace>
            <WindowsTaskbar />
            <Activation><strong>Activate Windows</strong>Go to Settings to activate Windows.</Activation>
        </Page>
    </>
)

export default App;
